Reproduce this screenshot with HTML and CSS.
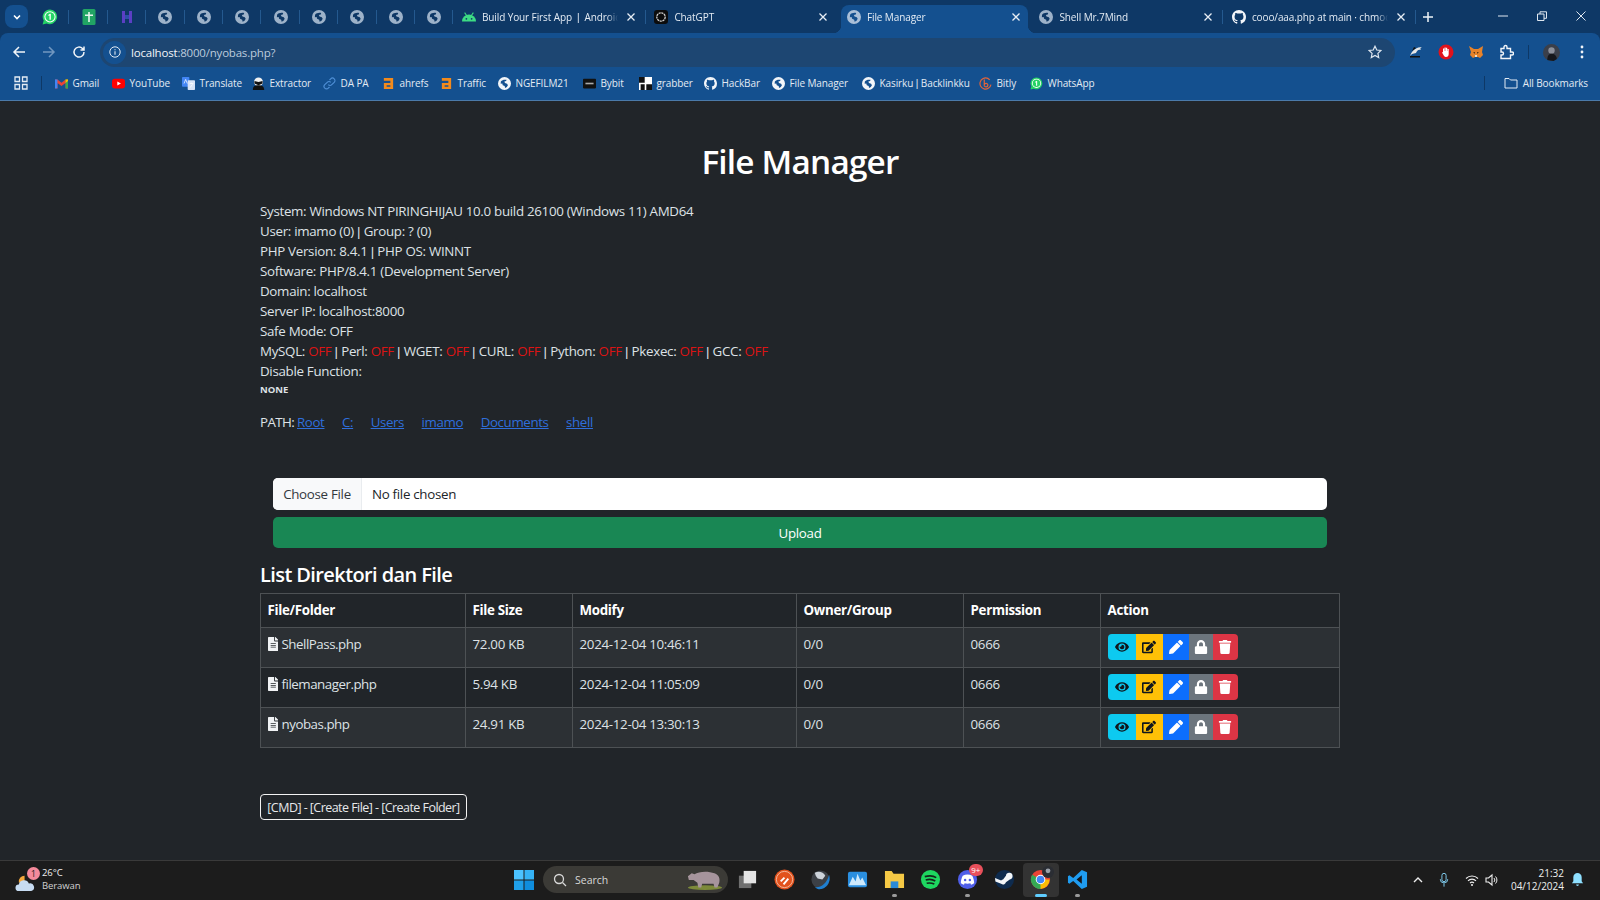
FILE: index.html
```html
<!DOCTYPE html>
<html lang="en">
<head>
<meta charset="utf-8">
<title>File Manager</title>
<link rel="stylesheet" href="styles.css">
</head>
<body>
<svg class="defs" width="0" height="0" aria-hidden="true">
  <defs>
    <symbol id="globe" viewBox="0 0 16 16"><path fill-rule="evenodd" d="M8 0a8 8 0 1 0 0 16A8 8 0 0 0 8 0zM3.500 5.500C5 3.500 8 2.800 10.500 3.500l-.5 1.500-2.200.6.8 1.700 2.600.9 1 1.800-1.300 2.300-2.200 1.200-.5-2.400-2.400-1.100-.5-1.900-2 .2z"/></symbol>
    <symbol id="gh" viewBox="0 0 16 16"><path d="M8 0C3.580 0 0 3.580 0 8c0 3.540 2.290 6.530 5.470 7.590.4.07.55-.17.55-.38 0-.19-.01-.82-.01-1.490-2.010.37-2.530-.49-2.690-.94-.09-.23-.48-.94-.82-1.130-.28-.15-.68-.52-.01-.53.63-.01 1.080.58 1.230.82.72 1.210 1.870.87 2.330.66.07-.52.28-.87.51-1.070-1.780-.2-3.640-.89-3.640-3.950 0-.87.31-1.590.82-2.150-.08-.2-.36-1.020.08-2.120 0 0 .67-.21 2.200.82.64-.18 1.320-.27 2-.27.68 0 1.360.09 2 .27 1.530-1.040 2.200-.82 2.200-.82.44 1.100.16 1.920.08 2.120.51.56.82 1.270.82 2.150 0 3.070-1.870 3.750-3.650 3.950.29.25.54.73.54 1.480 0 1.070-.01 1.930-.01 2.200 0 .21.15.46.55.38A8.013 8.013 0 0 0 16 8c0-4.420-3.580-8-8-8z"/></symbol>
    <symbol id="wa" viewBox="0 0 16 16"><path fill="#25d366" d="M8 .5a7.300 7.300 0 0 0-6.300 11L.6 15.500l4.100-1.100A7.300 7.300 0 1 0 8 .5z"/><circle cx="8" cy="7.800" r="5.600" fill="#fff"/><circle cx="8" cy="7.800" r="4.600" fill="#25d366"/><path fill="#fff" d="M8.800 4.800v6H7.500V6.400l-1.100.6V5.800l1.500-1z"/></symbol>
    <symbol id="x" viewBox="0 0 10 10"><path d="M1.500 1.500l7 7M8.500 1.500l-7 7" fill="none" stroke="currentColor" stroke-width="1.300"/></symbol>
    <symbol id="file" viewBox="0 0 384 512"><path d="M224 136V0H24C10.700 0 0 10.700 0 24v464c0 13.300 10.700 24 24 24h336c13.300 0 24-10.700 24-24V160H248c-13.200 0-24-10.800-24-24zm64 236c0 6.600-5.400 12-12 12H108c-6.600 0-12-5.400-12-12v-8c0-6.600 5.400-12 12-12h168c6.600 0 12 5.400 12 12v8zm0-64c0 6.600-5.400 12-12 12H108c-6.600 0-12-5.400-12-12v-8c0-6.600 5.400-12 12-12h168c6.600 0 12 5.400 12 12v8zm0-72v8c0 6.600-5.400 12-12 12H108c-6.600 0-12-5.400-12-12v-8c0-6.600 5.400-12 12-12h168c6.600 0 12 5.400 12 12zm96-114.100v6.100H256V0h6.100c6.400 0 12.500 2.500 17 7l97.900 98c4.500 4.500 7 10.600 7 16.900z"/></symbol>
    <symbol id="eye" viewBox="0 0 576 512"><path d="M572.520 241.400C518.290 135.590 410.930 64 288 64S57.680 135.640 3.480 241.410a32.350 32.350 0 0 0 0 29.190C57.710 376.410 165.070 448 288 448s230.320-71.640 284.520-177.410a32.350 32.350 0 0 0 0-29.190zM288 400a144 144 0 1 1 144-144 143.930 143.930 0 0 1-144 144zm0-240a95.310 95.310 0 0 0-25.310 3.790 47.850 47.850 0 0 1-66.900 66.900A95.780 95.780 0 1 0 288 160z"/></symbol>
    <symbol id="edit" viewBox="0 0 576 512"><path d="M402.600 83.200l90.200 90.200c3.800 3.800 3.800 10 0 13.800L274.400 405.600l-92.800 10.300c-12.400 1.400-22.900-9.100-21.500-21.500l10.300-92.800L388.800 83.200c3.800-3.800 10-3.800 13.800 0zm162-22.900l-48.800-48.800c-15.200-15.200-39.900-15.200-55.200 0l-35.400 35.400c-3.800 3.800-3.800 10 0 13.800l90.200 90.200c3.800 3.800 10 3.800 13.800 0l35.400-35.400c15.200-15.300 15.200-40 0-55.200zM384 346.200V448H64V128h229.800c3.200 0 6.200-1.300 8.500-3.500l40-40c7.600-7.600 2.200-20.500-8.500-20.500H48C21.500 64 0 85.500 0 112v352c0 26.500 21.500 48 48 48h352c26.500 0 48-21.500 48-48V306.200c0-10.700-12.900-16-20.500-8.500l-40 40c-2.200 2.300-3.500 5.300-3.500 8.500z"/></symbol>
    <symbol id="pencil" viewBox="0 0 512 512"><path d="M497.900 142.100l-46.100 46.100c-4.700 4.700-12.300 4.700-17 0l-111-111c-4.700-4.700-4.700-12.300 0-17l46.100-46.100c18.700-18.700 49.100-18.700 67.900 0l60.100 60.100c18.800 18.700 18.800 49.100 0 67.900zM284.200 99.800L21.600 362.400.4 483.900c-2.900 16.400 11.400 30.600 27.800 27.800l121.500-21.300 262.600-262.600c4.700-4.700 4.700-12.300 0-17l-111-111c-4.800-4.700-12.400-4.700-17.100 0z"/></symbol>
    <symbol id="lock" viewBox="0 0 448 512"><path d="M400 224h-24v-72C376 68.200 307.800 0 224 0S72 68.200 72 152v72H48c-26.500 0-48 21.500-48 48v192c0 26.500 21.500 48 48 48h352c26.500 0 48-21.500 48-48V272c0-26.500-21.500-48-48-48zm-104 0H152v-72c0-39.700 32.300-72 72-72s72 32.300 72 72v72z"/></symbol>
    <symbol id="trash" viewBox="0 0 448 512"><path d="M432 32H312l-9.400-18.700A24 24 0 0 0 281.100 0H166.800a23.720 23.720 0 0 0-21.400 13.300L136 32H16A16 16 0 0 0 0 48v32a16 16 0 0 0 16 16h416a16 16 0 0 0 16-16V48a16 16 0 0 0-16-16zM53.200 467a48 48 0 0 0 47.900 45h245.800a48 48 0 0 0 47.900-45L416 128H32z"/></symbol>
  </defs>
</svg>

<header class="chrome">
  <div class="tabstrip">
    <button class="tabsearch"><svg class="ico10" viewBox="0 0 10 10"><path d="M2 3.500l3 3 3-3" fill="none" stroke="currentColor" stroke-width="1.600"/></svg></button>
    <div class="pinned">
      <span class="pin"><svg class="ico16"><use href="#wa"/></svg></span>
      <span class="pin"><svg class="ico16" viewBox="0 0 16 16"><rect x="1.500" y="0" width="13" height="16" rx="1.500" fill="#21a464"/><path d="M7.200 3h1.600v2.500H12v1.600H8.800V13H7.200V7.100H4V5.500h3.200z" fill="#e8f5ee"/></svg></span>
      <span class="pin"><svg class="ico16" viewBox="0 0 16 16"><path d="M3 2h3v4h4V2h3v12h-3v-4H6v4H3z" fill="#5b3fc4"/><path d="M6 6h4v4H6z" fill="#2f4fa8"/></svg></span>
      <span class="pin"><svg class="ico14 dim"><use href="#globe"/></svg></span>
      <span class="pin"><svg class="ico14 dim"><use href="#globe"/></svg></span>
      <span class="pin"><svg class="ico14 dim"><use href="#globe"/></svg></span>
      <span class="pin"><svg class="ico14 dim"><use href="#globe"/></svg></span>
      <span class="pin"><svg class="ico14 dim"><use href="#globe"/></svg></span>
      <span class="pin"><svg class="ico14 dim"><use href="#globe"/></svg></span>
      <span class="pin"><svg class="ico14 dim"><use href="#globe"/></svg></span>
      <span class="pin"><svg class="ico14 dim"><use href="#globe"/></svg></span>
    </div>
    <div class="tabs">
      <div class="tab sep"><svg class="ico14" viewBox="0 0 16 16"><path d="M0 13a8 8 0 0 1 16 0z" fill="#3ddc84"/><path d="M3 3l2.500 3.500M13 3l-2.500 3.500" stroke="#3ddc84" stroke-width="1.200"/><circle cx="5" cy="10" r="1" fill="#0e3a6c"/><circle cx="11" cy="10" r="1" fill="#0e3a6c"/></svg><span class="tabtitle">Build Your First App &nbsp;<span class="pipe">|</span>&nbsp; Androic</span><svg class="close"><use href="#x"/></svg></div>
      <div class="tab"><svg class="ico14" viewBox="0 0 16 16"><rect width="16" height="16" rx="3.500" fill="#0c0c0c"/><circle cx="8" cy="8" r="4.800" fill="none" stroke="#cfcfcf" stroke-width="1.500" stroke-dasharray="2.500 .7"/></svg><span class="tabtitle">ChatGPT</span><svg class="close"><use href="#x"/></svg></div>
      <div class="tab active"><svg class="ico14 dim2"><use href="#globe"/></svg><span class="tabtitle">File Manager</span><svg class="close"><use href="#x"/></svg></div>
      <div class="tab sep"><svg class="ico14 dim"><use href="#globe"/></svg><span class="tabtitle">Shell Mr.7Mind</span><svg class="close"><use href="#x"/></svg></div>
      <div class="tab sep"><svg class="ico14 white"><use href="#gh"/></svg><span class="tabtitle">cooo/aaa.php at main · chmoc</span><svg class="close"><use href="#x"/></svg></div>
    </div>
    <svg class="newtab" viewBox="0 0 12 12"><path d="M6 1v10M1 6h10" stroke="currentColor" stroke-width="1.500"/></svg>
    <div class="winctl">
      <svg class="ctl" viewBox="0 0 10 10"><path d="M0 5h10" stroke="currentColor"/></svg>
      <svg class="ctl" viewBox="0 0 10 10"><path d="M.5 3h6.500v6.500H.5zM3 3V.8h6.500v6.500H7" fill="none" stroke="currentColor"/></svg>
      <svg class="ctl" viewBox="0 0 10 10"><path d="M.5.500l9 9M9.500.5l-9 9" stroke="currentColor"/></svg>
    </div>
  </div>
  <div class="toolbar">
    <div class="navs">
      <svg class="ico14 white" viewBox="0 0 14 14"><path d="M13 7H2M7 2L2 7l5 5" fill="none" stroke="currentColor" stroke-width="1.500"/></svg>
      <svg class="ico14 faint" viewBox="0 0 14 14"><path d="M1 7h11M7 2l5 5-5 5" fill="none" stroke="currentColor" stroke-width="1.500"/></svg>
      <svg class="ico14 white" viewBox="0 0 14 14"><path d="M12 7a5 5 0 1 1-1.500-3.500L12 5M12 1.500V5H8.500" fill="none" stroke="currentColor" stroke-width="1.500"/></svg>
    </div>
    <div class="omnibox">
      <span class="infochip"><svg class="ico12" viewBox="0 0 12 12"><circle cx="6" cy="6" r="5.200" fill="none" stroke="currentColor"/><path d="M6 5.300v3.400M6 3.200v1" stroke="currentColor" stroke-width="1.100"/></svg></span>
      <span class="url"><span class="host">localhost</span>:8000/nyobas.php?</span>
      <svg class="star" viewBox="0 0 14 14"><path d="M7 1.200l1.800 3.800 4.100.5-3 2.900.8 4.100L7 10.500l-3.700 2 .8-4.100-3-2.900 4.100-.5z" fill="none" stroke="currentColor" stroke-width="1.200"/></svg>
    </div>
    <div class="exts">
      <svg class="ico16" viewBox="0 0 16 16"><path d="M2 12C4 6 9 3 14 3c-2 1-2 2-1 3-3-1-4 1-5 3l-4 1z" fill="#e6e6e6"/><path d="M2 12h10v1.500H2z" fill="#111"/><path d="M4 7l2-4 2 1z" fill="#111"/></svg>
      <svg class="ico16" viewBox="0 0 16 16"><circle cx="8" cy="8" r="7.500" fill="#e0121c"/><path d="M5 8V4.500h1.200V7h.3V3.500h1.200V7H8V3.800h1.200V7h.3V5h1.200v5c0 2-1 3-2.700 3C6.300 13 5.500 11 4 8.500z" fill="#fff"/></svg>
      <svg class="ico16" viewBox="0 0 16 16"><path d="M1 2l5 3h4l5-3-1 6 1 3-3 3-2-1H7l-2 1-3-3 1-3z" fill="#e8832a"/><path d="M5 8h2v2zM11 8H9v2z" fill="#5b3a1a"/><path d="M7 11h2v2H7z" fill="#f2e0c6"/></svg>
      <svg class="ico16 white" viewBox="0 0 16 16"><path d="M3 4.500h3V3a1.500 1.500 0 0 1 3 0v1.500h3.500V8H14a1.500 1.500 0 0 1 0 3h-1.500v3.500H3V11h1a1.500 1.500 0 0 0 0-3H3z" fill="none" stroke="currentColor" stroke-width="1.400"/></svg>
      <span class="extsep"></span>
      <svg class="avatar" viewBox="0 0 16 16"><circle cx="8" cy="8" r="8" fill="#3a3f4a"/><path d="M4 15c0-4 2-6 4-6s5 2 5 5l-3 2z" fill="#15171c"/><circle cx="8" cy="6" r="3" fill="#8b8f99"/></svg>
      <svg class="ico16 white" viewBox="0 0 16 16"><circle cx="8" cy="3" r="1.400" fill="currentColor"/><circle cx="8" cy="8" r="1.400" fill="currentColor"/><circle cx="8" cy="13" r="1.400" fill="currentColor"/></svg>
    </div>
  </div>
  <nav class="bookmarks">
    <svg class="apps" viewBox="0 0 14 14"><path d="M1 1h4.500v4.500H1zM8.500 1H13v4.500H8.500zM1 8.500h4.500V13H1zM8.500 8.500H13V13H8.500z" fill="none" stroke="currentColor" stroke-width="1.300"/></svg>
    <span class="bmsep"></span>
    <div class="bmlist">
      <a class="bm"><svg class="ico13" viewBox="0 0 16 16"><path d="M0 3h3l5 4 5-4h3v11h-3V7.500L8 11 3 7.500V14H0z" fill="#ea4335"/><path d="M0 3h3v11H0z" fill="#4285f4"/><path d="M13 3h3v11h-3z" fill="#34a853"/><path d="M13 3l3 0v2l-3 2.500z" fill="#fbbc05"/></svg>Gmail</a>
      <a class="bm"><svg class="ico13" viewBox="0 0 16 16"><rect y="2" width="16" height="12" rx="3.500" fill="#f00"/><path d="M6.500 5.500L11 8l-4.500 2.500z" fill="#fff"/></svg>YouTube</a>
      <a class="bm"><svg class="ico13" viewBox="0 0 16 16"><rect width="9" height="12" rx="1" fill="#4285f4"/><rect x="7" y="4" width="9" height="12" rx="1" fill="#d7e3f7"/><path d="M2.500 8l2-5 2 5M9.500 8h4.500M11.700 7v1M10 13l3-4" stroke="#fff" stroke-width=".9" fill="none"/></svg>Translate</a>
      <a class="bm"><svg class="ico13" viewBox="0 0 16 16"><circle cx="8" cy="6" r="5.500" fill="#f2f2f2"/><path d="M1 16c0-5 3-6 7-6s7 1 7 6z" fill="#111"/><path d="M3 5l5 1 5-1v3l-5 2-5-2z" fill="#111"/></svg>Extractor</a>
      <a class="bm"><svg class="ico13" viewBox="0 0 16 16"><path d="M6.500 9.500a3 3 0 0 0 4.300 0l3-3a3 3 0 0 0-4.300-4.300L8 3.700M9.500 6.500a3 3 0 0 0-4.300 0l-3 3a3 3 0 0 0 4.300 4.300L8 12.300" fill="none" stroke="#4f8fd6" stroke-width="1.400"/></svg>DA PA</a>
      <a class="bm"><svg class="ico13" viewBox="0 0 12 14"><path d="M1 1h10v12H1V6.500h7V4H1zM4 9v1.500h4V9z" fill="#f28a1c" fill-rule="evenodd"/></svg>ahrefs</a>
      <a class="bm"><svg class="ico13" viewBox="0 0 12 14"><path d="M1 1h10v12H1V6.500h7V4H1zM4 9v1.500h4V9z" fill="#f28a1c" fill-rule="evenodd"/></svg>Traffic</a>
      <a class="bm"><svg class="ico13 white"><use href="#globe"/></svg>NGEFILM21</a>
      <a class="bm"><svg class="ico13" viewBox="0 0 16 16"><rect y="2" width="16" height="12" rx="1" fill="#111"/><path d="M3 7h10v2H3z" fill="#aaa"/></svg>Bybit</a>
      <a class="bm"><svg class="ico13" viewBox="0 0 16 16"><rect width="16" height="16" fill="#fff"/><path d="M0 0h7v7H0zM9 9h7v7H9zM2 9h5v7H2z" fill="#111"/></svg>grabber</a>
      <a class="bm"><svg class="ico13 white"><use href="#gh"/></svg>HackBar</a>
      <a class="bm"><svg class="ico13 white"><use href="#globe"/></svg>File Manager</a>
      <a class="bm"><svg class="ico13 white"><use href="#globe"/></svg><span>Kasirku <span class="pipe">|</span> Backlinkku</span></a>
      <a class="bm"><svg class="ico13" viewBox="0 0 16 16"><circle cx="8" cy="8" r="6.800" fill="none" stroke="#e0643a" stroke-width="1.500" stroke-dasharray="30 6" transform="rotate(60 8 8)"/><path d="M6.500 3v8.500M6.500 10a2.200 2.200 0 1 1 4.400 0 2.200 2.200 0 0 1-4.400 0" fill="none" stroke="#e0643a" stroke-width="1.500"/></svg>Bitly</a>
      <a class="bm"><svg class="ico13"><use href="#wa"/></svg>WhatsApp</a>
    </div>
    <a class="bm allbm"><svg class="ico14" viewBox="0 0 14 14"><path d="M1 2.500h4l1.500 1.500h6.500v8H1z" fill="none" stroke="currentColor"/></svg>All Bookmarks</a>
  </nav>
</header>

<main class="page">
  <div class="container">
    <h1 class="title">File Manager</h1>
    <section class="sysinfo">
      <div>System: Windows NT PIRINGHIJAU 10.0 build 26100 (Windows 11) AMD64</div>
      <div>User: imamo (0) <span class="pipe">|</span> Group: ? (0)</div>
      <div>PHP Version: 8.4.1 <span class="pipe">|</span> PHP OS: WINNT</div>
      <div>Software: PHP/8.4.1 (Development Server)</div>
      <div>Domain: localhost</div>
      <div>Server IP: localhost:8000</div>
      <div>Safe Mode: OFF</div>
      <div>MySQL: <span class="off">OFF</span> <span class="pipe">|</span> Perl: <span class="off">OFF</span> <span class="pipe">|</span> WGET: <span class="off">OFF</span> <span class="pipe">|</span> CURL: <span class="off">OFF</span> <span class="pipe">|</span> Python: <span class="off">OFF</span> <span class="pipe">|</span> Pkexec: <span class="off">OFF</span> <span class="pipe">|</span> GCC: <span class="off">OFF</span></div>
      <div>Disable Function:</div>
      <div class="none">NONE</div>
    </section>
    <div class="path">PATH: <a href="#">Root</a><a href="#">C:</a><a href="#">Users</a><a href="#">imamo</a><a href="#">Documents</a><a href="#">shell</a></div>
    <form class="upload">
      <div class="fileinput"><span class="filebtn">Choose File</span><span class="filename">No file chosen</span></div>
      <button class="uploadbtn" type="button">Upload</button>
    </form>
    <h3 class="listhead">List Direktori dan File</h3>
    <table class="files">
      <colgroup><col class="c1"><col class="c2"><col class="c3"><col class="c4"><col class="c5"><col class="c6"></colgroup>
      <thead><tr><th>File/Folder</th><th>File Size</th><th>Modify</th><th>Owner/Group</th><th>Permission</th><th>Action</th></tr></thead>
      <tbody>
        <tr><td class="fname"><svg class="fileico"><use href="#file"/></svg>ShellPass.php</td><td>72.00 KB</td><td>2024-12-04 10:46:11</td><td>0/0</td><td>0666</td><td><div class="actions"><span class="act view"><svg><use href="#eye"/></svg></span><span class="act edit"><svg><use href="#edit"/></svg></span><span class="act ren"><svg><use href="#pencil"/></svg></span><span class="act perm"><svg><use href="#lock"/></svg></span><span class="act del"><svg><use href="#trash"/></svg></span></div></td></tr>
        <tr><td class="fname"><svg class="fileico"><use href="#file"/></svg>filemanager.php</td><td>5.94 KB</td><td>2024-12-04 11:05:09</td><td>0/0</td><td>0666</td><td><div class="actions"><span class="act view"><svg><use href="#eye"/></svg></span><span class="act edit"><svg><use href="#edit"/></svg></span><span class="act ren"><svg><use href="#pencil"/></svg></span><span class="act perm"><svg><use href="#lock"/></svg></span><span class="act del"><svg><use href="#trash"/></svg></span></div></td></tr>
        <tr><td class="fname"><svg class="fileico"><use href="#file"/></svg>nyobas.php</td><td>24.91 KB</td><td>2024-12-04 13:30:13</td><td>0/0</td><td>0666</td><td><div class="actions"><span class="act view"><svg><use href="#eye"/></svg></span><span class="act edit"><svg><use href="#edit"/></svg></span><span class="act ren"><svg><use href="#pencil"/></svg></span><span class="act perm"><svg><use href="#lock"/></svg></span><span class="act del"><svg><use href="#trash"/></svg></span></div></td></tr>
      </tbody>
    </table>
    <button class="cmdbtn" type="button">[CMD] - [Create File] - [Create Folder]</button>
  </div>
</main>

<footer class="taskbar">
  <div class="weather">
    <span class="wicon">
      <svg class="wsvg" viewBox="0 0 22 22"><path d="M10 4a6 6 0 0 0-6 7l6 1z" fill="#f5a83b"/><path d="M4 20a3.500 3.500 0 0 1 0-7 5.500 5.500 0 0 1 10.500-1 4 4 0 0 1 2.500 8z" fill="#c7dcf2"/></svg>
      <span class="wbadge">1</span>
    </span>
    <span class="wtext"><span class="wtemp">26°C</span><span class="wdesc">Berawan</span></span>
  </div>
  <div class="tbcenter">
    <svg class="winlogo" viewBox="0 0 20 20"><path d="M0 0h9.500v9.500H0z" fill="#4cc2ff"/><path d="M10.500 0H20v9.500h-9.500z" fill="#35b2f5"/><path d="M0 10.500h9.500V20H0z" fill="#1f9fe8"/><path d="M10.500 10.500H20V20h-9.500z" fill="#0f8ddd"/></svg>
    <div class="search">
      <svg class="ico14" viewBox="0 0 14 14"><circle cx="6" cy="6" r="4.500" fill="none" stroke="currentColor" stroke-width="1.300"/><path d="M9.500 9.500L13 13" stroke="currentColor" stroke-width="1.300"/></svg>
      <span>Search</span>
      <svg class="rhino" viewBox="0 0 40 22"><ellipse cx="20" cy="19" rx="18" ry="2.500" fill="#7d8a3a"/><path d="M2 7l4-3 3 1c4-3 14-4 21-1 5 2 6 6 5 10l-2 5h-3l-1-4-12 0-1 4h-3l-1-5-4-3-5 0z" fill="#a6949c"/></svg>
    </div>
    <div class="tbapps">
      <span class="tbapp"><svg viewBox="0 0 22 22"><rect x="2" y="7" width="13" height="13" fill="#6f6f6f"/><rect x="7" y="2" width="13" height="13" fill="#e4e4e4"/></svg></span>
      <span class="tbapp"><svg viewBox="0 0 22 22"><circle cx="11" cy="11" r="10.500" fill="#e2521d"/><circle cx="11" cy="11" r="8.500" fill="none" stroke="#f6d3c0" stroke-width=".8"/><path d="M7 13l4-4M10 16l5-6" stroke="#fff" stroke-width="2"/></svg></span>
      <span class="tbapp"><svg viewBox="0 0 22 22"><circle cx="11" cy="11" r="9.500" fill="#3c4046"/><path d="M5 4c4-2 9-1 11 3l-3 4-5-1-2-3z" fill="#cdd3da"/><path d="M20 6c2 6-1 13-8 15-3 .5-5-.5-7-2 6 1 13-4 15-13z" fill="#1f7fd0"/></svg></span>
      <span class="tbapp"><svg viewBox="0 0 22 22"><rect x="1" y="3" width="20" height="16" rx="2" fill="#2a8fe0"/><path d="M2 17l4-9 3 5 2-8 3 7 2-3 4 8z" fill="#cfeafc"/></svg></span>
      <span class="tbapp"><svg viewBox="0 0 22 22"><path d="M1 2h7l2 3h11v15H1z" fill="#f6c945"/><rect x="7" y="13" width="8" height="7" fill="#2b8ad6"/></svg><i class="dot"></i></span>
      <span class="tbapp"><svg viewBox="0 0 22 22"><circle cx="11" cy="11" r="10" fill="#1ed760"/><path d="M5 8c4-1 9-1 12 1M6 11.500c3-1 7-.8 10 1M7 15c3-.7 5-.5 8 .8" fill="none" stroke="#15251a" stroke-width="1.700"/></svg></span>
      <span class="tbapp"><svg viewBox="0 0 22 22"><circle cx="11" cy="11" r="10" fill="#4f5ee8"/><path d="M6 7c3-1.500 7-1.500 10 0 1.200 2.500 2 5 2 8-1.500 1-2.500 1.300-3.300 1.500L14 15c-2 .5-4 .5-6 0l-.7 1.500C6.500 16.300 5.500 16 4 15c0-3 .8-5.500 2-8z" fill="#fff"/><circle cx="8.500" cy="11.500" r="1.300" fill="#4f5ee8"/><circle cx="13.500" cy="11.500" r="1.300" fill="#4f5ee8"/></svg><i class="tbbadge">9+</i><i class="dot"></i></span>
      <span class="tbapp"><svg viewBox="0 0 22 22"><circle cx="11" cy="11" r="10" fill="#0e2b4e"/><path d="M1.500 13l6 2.500a3 3 0 0 0 5-1.500l4-3a3.500 3.500 0 1 0-4-4l-3 4a3 3 0 0 0-2 1L1 9.500" fill="#f3f6f9"/></svg></span>
      <span class="tbapp current"><svg viewBox="0 0 22 22"><circle cx="11" cy="11" r="10" fill="#ea4335"/><path d="M11 11h9.500A10 10 0 0 1 11 21l-1-1z" fill="#fbbc05"/><path d="M11 11L11 21A10 10 0 0 1 2.300 6z" fill="#34a853"/><circle cx="11" cy="11" r="5" fill="#fff"/><circle cx="11" cy="11" r="4" fill="#4285f4"/></svg><svg class="chromeav" viewBox="0 0 10 10"><circle cx="5" cy="5" r="5" fill="#2a2d33"/><circle cx="5" cy="4" r="2" fill="#9aa0aa"/></svg><i class="pill"></i></span>
      <span class="tbapp"><svg viewBox="0 0 22 22"><path d="M15.500 1L21 3.500v15L15.500 21 6.500 12.500 2.500 15.500 1 14.500V7.500l1.500-1 4 3z" fill="#1f9cf0"/><path d="M15.500 6.500L10 11l5.500 4.500z" fill="#16161a"/></svg><i class="dot"></i></span>
    </div>
  </div>
  <div class="tray">
    <svg class="ico12 traychev" viewBox="0 0 12 12"><path d="M2 8l4-4 4 4" fill="none" stroke="currentColor" stroke-width="1.400"/></svg>
    <svg class="mic" viewBox="0 0 12 18"><rect x="3.500" y="1" width="5" height="10" rx="2.500" fill="none" stroke="#7cc7e8" stroke-width="1.200"/><path d="M1.500 8a4.500 4.500 0 0 0 9 0M6 13v4" fill="none" stroke="#7cc7e8" stroke-width="1.200"/></svg>
    <svg class="ico14" viewBox="0 0 14 14"><path d="M1 5.500a8.500 8.500 0 0 1 12 0M3 7.800a5.600 5.600 0 0 1 8 0M5 10a3 3 0 0 1 4 0" fill="none" stroke="currentColor" stroke-width="1.100"/><circle cx="7" cy="12" r="1" fill="currentColor"/></svg>
    <svg class="ico14" viewBox="0 0 14 14"><path d="M1 5h2.500L7 2v10L3.500 9H1z" fill="none" stroke="currentColor" stroke-width="1.100"/><path d="M9 5a3 3 0 0 1 0 4M10.500 3.500a5 5 0 0 1 0 7" fill="none" stroke="currentColor"/></svg>
    <span class="clock"><span>21:32</span><span>04/12/2024</span></span>
    <svg class="bell" viewBox="0 0 14 16"><path d="M7 1a4.500 4.500 0 0 0-4.500 4.500V10L1 12h12l-1.500-2V5.500A4.500 4.500 0 0 0 7 1z" fill="#8fe0ff"/><path d="M5.500 13.500h3a1.500 1.500 0 0 1-3 0z" fill="#8fe0ff"/></svg>
  </div>
</footer>
</body>
</html>
```
FILE: styles.css
```css
* { box-sizing: border-box; }
html, body { height: 100%; }
body {
  margin: 0;
  height: 900px;
  width: 1600px;
  overflow: hidden;
  display: flex;
  flex-direction: column;
  background: #212529;
  color: #dee2e6;
  font-family: "Open Sans", "Noto Sans", sans-serif;
}
.defs { position: absolute; }
svg { display: block; flex: none; }
.pipe { font-family: "Liberation Sans", sans-serif; letter-spacing: 0; line-height: 0; }
.ico10 { width: 10px; height: 10px; }
.ico12 { width: 12px; height: 12px; }
.ico13 { width: 13px; height: 13px; }
.ico14 { width: 14px; height: 14px; }
.ico16 { width: 16px; height: 16px; }
.dim { color: #9db2c9; fill: #9db2c9; }
.dim2 { color: #a9bfd8; fill: #a9bfd8; }
.white { color: #f2f5f9; fill: #f2f5f9; }
.faint { color: #7197c0; }

/* browser chrome */
.chrome { flex: none; background: #0e3866; color: #e3ebf4; font-size: 10px; letter-spacing: -0.1px; height: 101px; }
.tabstrip { height: 33px; display: flex; align-items: stretch; padding-left: 5px; }
.tabsearch { width: 23px; height: 23px; margin-top: 5px; border: 0; border-radius: 8px; background: #14508f; color: #fff; display: flex; align-items: center; justify-content: center; padding: 0; }
.pinned { display: flex; margin-left: 3px; }
.pin { width: 38.4px; height: 28px; display: flex; align-items: center; justify-content: center; position: relative; margin-top: 3px; }
.pin::after { content: ""; position: absolute; right: 0; top: 7px; height: 14px; width: 1px; background: #24598f; }
.tabs { display: grid; grid-template-columns: repeat(5, 187px); column-gap: 5.5px; margin-left: 2.6px; }
.tab { position: relative; margin-top: 5px; height: 28px; display: flex; align-items: center; padding: 0 6px 4px 6px; border-radius: 8px 8px 0 0; white-space: pre; gap: 6px; }
.tab.sep::after { content: ""; position: absolute; right: -3px; top: 5px; height: 14px; width: 1px; background: #24598f; }
.tab.active { background: #14508f; }
.tab.active::before, .tab.active::after { content: ""; position: absolute; bottom: 0; width: 8px; height: 8px; }
.tab.active::before { left: -8px; background: radial-gradient(circle at 0 0, transparent 8px, #14508f 8.5px); }
.tab.active::after { right: -8px; background: radial-gradient(circle at 100% 0, transparent 8px, #14508f 8.5px); }
.tabtitle { flex: 1; min-width: 0; overflow: hidden; -webkit-mask-image: linear-gradient(to right, #000 92%, transparent); mask-image: linear-gradient(to right, #000 92%, transparent); }
.close { width: 10px; height: 10px; margin-left: 2px; margin-right: 1px; color: #e8eef5; }
.newtab { width: 12px; height: 12px; margin: 11px 0 0 9px; color: #eef3f8; }
.winctl { margin-left: auto; display: flex; align-items: center; gap: 29px; padding: 0 14px 2px 0; }
.ctl { width: 10px; height: 10px; color: #dfe7f0; }
.toolbar { height: 34px; background: #14508f; border-radius: 8px 8px 0 0; display: flex; align-items: center; padding-top: 4px; }
.navs { display: flex; gap: 16px; padding-left: 11.500px; width: 100px; }
.omnibox { width: 1295px; height: 29px; border-radius: 15px; background: #1d4672; display: flex; align-items: center; padding-left: 3px; font-size: 11.5px; letter-spacing: -0.2px; color: #bccbdd; }
.infochip { width: 23px; height: 23px; border-radius: 50%; background: #14508f; display: flex; align-items: center; justify-content: center; color: #e3ebf4; }
.url { margin-left: 5px; flex: 1; }
.host { color: #f2f5f9; }
.star { width: 14px; height: 14px; margin-right: 13px; color: #dfe7f0; }
.exts { display: flex; align-items: center; padding-left: 13px; }
.exts > svg:nth-child(1), .exts > svg:nth-child(2), .exts > svg:nth-child(3) { margin-right: 14px; }
.extsep { width: 1px; height: 14px; background: #0e3866; margin: 0 14px; }
.avatar { width: 17px; height: 17px; margin-right: 14px; }
.bookmarks { height: 34px; background: #14508f; border-bottom: 1px solid #4b7aa9; display: flex; align-items: center; padding-bottom: 1px; }
.apps { width: 14px; height: 14px; margin-left: 14px; color: #e3ebf4; }
.bmsep, .allbm::before { width: 1px; height: 14px; background: #0e3866; }
.bmsep { margin: 0 13px 0 12.500px; }
.bmlist { display: grid; grid-template-columns: 57px 70px 70px 71px 59px 58px 58px 85px 56px 65px 68px 90px 117px 51px 70px; }
.bm { display: flex; align-items: center; gap: 5px; white-space: pre; color: #e3ebf4; }
.allbm { margin-left: auto; padding-right: 12px; }
.allbm::before { content: ""; margin-right: 14px; }

/* page */
.page { flex: 1; min-height: 0; overflow: hidden; }
.container { width: 1100px; margin: 0 auto; padding: 40px 10px 0; font-size: 13.33px; letter-spacing: -0.3px; line-height: 20px; }
.title { margin: 0 0 20px; text-align: center; color: #fff; font-size: 33.33px; letter-spacing: -0.8px; line-height: 40px; font-weight: 600; }
.sysinfo { color: #dee2e6; }
.off { color: #dc1414; }
.none { font-size: 9.5px; font-weight: 700; line-height: 17px; letter-spacing: 0; }
.path { margin-top: 14px; letter-spacing: -0.6px; word-spacing: 0; }
.path a { color: #2f6fdc; margin-right: 17.5px; letter-spacing: -0.38px; }
.upload { margin-top: 46px; padding: 0 13px; display: flex; flex-direction: column; gap: 7px; }
.fileinput { height: 32px; background: #fff; border-radius: 5px; display: flex; align-items: center; color: #212529; overflow: hidden; }
.filebtn { height: 100%; width: 89px; background: #f8f9fa; display: flex; align-items: center; justify-content: center; border-right: 1px solid #e9ecef; color: #33383d; }
.filename { margin-left: 10px; }
.uploadbtn { height: 31px; border: 0; border-radius: 5px; background: #198754; color: #fff; font: inherit; letter-spacing: inherit; }
.listhead { margin: 15px 0 6px; color: #fff; font-size: 20px; letter-spacing: -0.6px; line-height: 24px; font-weight: 600; }
.files { width: 1080px; table-layout: fixed; border-collapse: collapse; }
.c1 { width: 205px; }
.c2 { width: 107px; }
.c3 { width: 224px; }
.c4 { width: 167px; }
.c5 { width: 137px; }
.files th, .files td { border: 1px solid #4d5154; padding: 6px 6.5px; text-align: left; vertical-align: top; }
.files th { color: #fff; font-weight: 700; height: 34px; }
.files td { height: 40px; }
.files tbody tr:nth-child(odd) td { background: #2c3034; }
.files td.fname { letter-spacing: -0.48px; }
.fileico { display: inline-block; width: 10.500px; height: 14px; fill: #f0f2f4; margin-right: 3.500px; vertical-align: -2px; }
.actions { display: flex; height: 26px; border-radius: 4px; overflow: hidden; width: fit-content; }
.act { display: flex; align-items: center; justify-content: center; height: 26px; }
.act svg { width: 14px; height: 14px; }
.view { width: 28px; background: #0dcaf0; fill: #10171c; }
.edit { width: 27px; background: #ffc107; fill: #10171c; }
.ren { width: 26px; background: #0d6efd; fill: #fff; }
.perm { width: 24px; background: #6c757d; fill: #fff; }
.del { width: 25px; background: #dc3545; fill: #fff; }
.cmdbtn { display: block; margin-top: 46px; height: 26px; width: 207px; padding: 0; border: 1px solid #f2f2f2; border-radius: 4px; background: transparent; color: #e6e8ea; font-family: inherit; font-size: 12.5px; letter-spacing: -0.55px; white-space: nowrap; }

/* taskbar */
.taskbar { flex: none; height: 40px; background: #1c1c1c; border-top: 1px solid #3a3a3a; display: flex; align-items: center; color: #eee; font-size: 10px; padding-bottom: 2px; }
.weather { display: flex; align-items: center; width: 514px; padding-left: 15px; gap: 4px; }
.wicon { position: relative; width: 21px; height: 26px; display: flex; align-items: flex-end; }
.wsvg { width: 21px; height: 21px; }
.wbadge { position: absolute; right: -4px; top: 0; width: 13px; height: 13px; border-radius: 50%; background: #f58a9b; color: #1a1a1a; font-size: 8.5px; line-height: 13px; text-align: center; }
.wtext { display: flex; flex-direction: column; line-height: 12.500px; margin-left: 2px; color: #f0f0f0; letter-spacing: -0.1px; font-size: 9.5px; }
.wdesc { color: #d0d0d0; }
.tbcenter { display: flex; align-items: center; }
.winlogo { width: 20px; height: 20px; }
.search { width: 185px; height: 27px; margin-left: 9px; border-radius: 14px; background: #3b3a36; display: flex; align-items: center; padding-left: 10px; gap: 8px; color: #d8d8d8; font-size: 10.5px; }
.rhino { width: 38px; height: 22px; margin-left: auto; margin-right: 4px; }
.tbapps { display: flex; margin-left: 1px; }
.tbapp { position: relative; width: 36.700px; height: 34px; display: flex; align-items: center; justify-content: center; }
.tbapp > svg:first-child { width: 21px; height: 21px; }
.current { background: #333; border-radius: 4px; }
.chromeav { position: absolute; top: 3px; right: 5px; width: 12px; height: 12px; }
.dot { position: absolute; left: 50%; bottom: 0; width: 5px; height: 3px; margin-left: -2.500px; border-radius: 2px; background: #9a9a9a; }
.pill { position: absolute; left: 50%; bottom: 0; width: 12px; height: 3px; margin-left: -6px; border-radius: 2px; background: #60cdff; }
.tbbadge { position: absolute; top: 1px; right: 3px; width: 14px; height: 12px; border-radius: 6px; background: #e8505b; color: #fff; font-size: 8px; font-style: normal; line-height: 12px; text-align: center; }
.tray { margin-left: auto; display: flex; align-items: center; color: #eee; padding-right: 16px; }
.traychev { margin-right: 15px; }
.mic { width: 10px; height: 16px; margin-right: 16px; }
.tray > svg:nth-child(3) { margin-right: 6px; }
.clock { display: flex; flex-direction: column; align-items: flex-end; line-height: 13px; margin-left: 12px; margin-right: 7px; }
.bell { width: 13px; height: 15px; }
```
